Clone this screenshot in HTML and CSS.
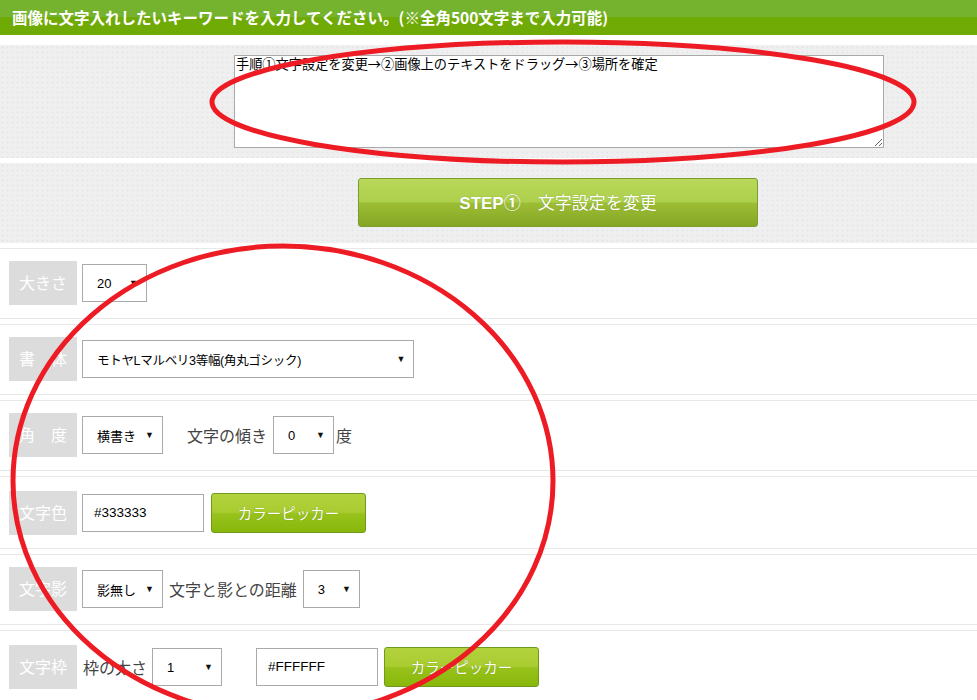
FILE: index.html
```html
<!DOCTYPE html>
<html lang="ja">
<head>
<meta charset="utf-8">
<title>文字入れ</title>
<link rel="stylesheet" href="styles.css">
</head>
<body>
<header class="title-bar">画像に文字入れしたいキーワードを入力してください。(※全角500文字まで入力可能)</header>

<section class="panel panel-text">
  <textarea class="keyword">手順①文字設定を変更→②画像上のテキストをドラッグ→③場所を確定</textarea>
</section>

<section class="panel panel-step">
  <button class="step-btn"><b>STEP①</b>　文字設定を変更</button>
</section>

<div class="settings">
  <div class="row">
    <span class="label">大きさ</span>
    <div class="select w-size"><span>20</span><i>▼</i></div>
  </div>
  <div class="row">
    <span class="label">書　体</span>
    <div class="select w-font"><span>モトヤLマルベリ3等幅(角丸ゴシック)</span><i>▼</i></div>
  </div>
  <div class="row">
    <span class="label">角　度</span>
    <div class="select w-dir"><span>横書き</span><i>▼</i></div>
    <span class="text t-tilt">文字の傾き</span>
    <div class="select w-deg"><span>0</span><i>▼</i></div>
    <span class="text t-unit">度</span>
  </div>
  <div class="row row-tall">
    <span class="label">文字色</span>
    <div class="input w-color">#333333</div>
    <button class="picker">カラーピッカー</button>
  </div>
  <div class="row">
    <span class="label">文字影</span>
    <div class="select w-dir"><span>影無し</span><i>▼</i></div>
    <span class="text t-dist">文字と影との距離</span>
    <div class="select w-dist"><span>3</span><i>▼</i></div>
  </div>
  <div class="row row-tall">
    <span class="label">文字枠</span>
    <span class="text t-width">枠の太さ</span>
    <div class="select w-border"><span>1</span><i>▼</i></div>
    <div class="input w-color w-color2">#FFFFFF</div>
    <button class="picker">カラーピッカー</button>
  </div>
</div>

<svg class="annot" width="977" height="700" viewBox="0 0 977 700">
  <ellipse cx="563" cy="102" rx="351" ry="60" fill="none" stroke="#ed1c24" stroke-width="5"/>
  <ellipse cx="283" cy="481" rx="270" ry="235" fill="none" stroke="#ed1c24" stroke-width="5"/>
</svg>
</body>
</html>
```

FILE: styles.css
```css
* { box-sizing: border-box; }

html, body {
  margin: 0;
  padding: 0;
  background: #ffffff;
  overflow: hidden;
}

body {
  width: 977px;
  height: 700px;
  position: relative;
  font-family: "Liberation Sans", "Noto Sans CJK JP", sans-serif;
  color: #333333;
}

.title-bar {
  height: 35px;
  line-height: 34px;
  padding-left: 12px;
  background: linear-gradient(#75b32e 0, #75b32e 50%, #70aa04 50%, #70aa04 100%);
  color: #ffffff;
  font-family: "Noto Sans CJK JP", sans-serif;
  font-weight: 700;
  font-size: 15.5px;
  white-space: nowrap;
}

.panel {
  background-color: #efefef;
  background-image: radial-gradient(circle, #e0e2ea 0.7px, transparent 1.1px);
  background-size: 5px 5px;
}

.panel-text {
  margin-top: 10px;
  padding: 10px 0 10px 234px;
  height: 113px;
}

.keyword {
  display: block;
  width: 650px;
  height: 93px;
  margin: 0;
  padding: 0 1px;
  border: 1px solid #a9a9a9;
  background: #ffffff;
  font-family: "Noto Sans CJK JP", sans-serif;
  font-size: 13.2px;
  line-height: 16px;
  color: #000000;
  resize: both;
}

.panel-step {
  margin-top: 5px;
  height: 80px;
  padding: 15px 0 0 358px;
}

.step-btn {
  display: block;
  width: 400px;
  height: 49px;
  margin: 0;
  padding: 0 0 2px 0;
  border: 1px solid #7a9f30;
  border-radius: 3px;
  background: linear-gradient(#bad85a 0%, #acd04c 48%, #9dbd35 52%, #84a623 100%);
  color: #ffffff;
  font-family: "Noto Sans CJK JP", sans-serif;
  font-size: 17px;
  text-shadow: 0 0 1px rgba(80, 110, 20, 0.5);
}

.step-btn b {
  font-family: "Liberation Sans", "Noto Sans CJK JP", sans-serif;
  font-weight: 700;
}

.settings {
  margin-top: 5px;
}

.row {
  display: flex;
  align-items: center;
  border-top: 1px solid #e8e8e8;
  border-bottom: 1px solid #e8e8e8;
  padding: 12px 0 13px 9px;
  margin-bottom: 5px;
}

.row-tall {
  padding-top: 14px;
}

.label {
  flex: none;
  width: 68px;
  height: 44px;
  line-height: 42px;
  background: #dcdcdc;
  color: #ffffff;
  text-align: center;
  font-family: "Noto Sans CJK JP", sans-serif;
  font-size: 16px;
  margin-right: 5px;
}

.select {
  flex: none;
  display: flex;
  align-items: center;
  justify-content: space-between;
  height: 38px;
  padding: 0 8px 0 14px;
  border: 1px solid #a9a9a9;
  background: #ffffff;
  color: #000000;
  font-size: 13px;
  white-space: nowrap;
}

.select i {
  font-style: normal;
  font-size: 9px;
  color: #111111;
}

.w-size { width: 65px; }
.w-font { width: 332px; font-size: 12.5px; letter-spacing: -0.3px; }
.w-dir { width: 81px; }
.w-deg { width: 61px; }
.w-dist { width: 57px; }
.w-border { width: 70px; }

.text {
  flex: none;
  font-family: "Noto Sans CJK JP", sans-serif;
  font-size: 16px;
  color: #444444;
}

.t-tilt { margin: 0 6px 0 24px; }
.t-unit { margin-left: 2px; }
.t-dist { margin: 0 6px 0 6px; }
.t-width { margin: 0 5px 0 1px; }

.input {
  flex: none;
  height: 38px;
  line-height: 36px;
  padding: 0 11px;
  border: 1px solid #a9a9a9;
  background: #ffffff;
  color: #000000;
  font-size: 13.5px;
}

.w-color { width: 122px; }
.w-color2 { margin-left: 34px; }

.picker {
  flex: none;
  width: 155px;
  height: 40px;
  margin: 0 0 0 7px;
  padding: 0 0 2px 0;
  border: 1px solid #6f9a1e;
  border-radius: 3px;
  background: linear-gradient(#b3d23e 0%, #a9cc30 48%, #98c21c 52%, #88b70a 100%);
  color: #ffffff;
  font-family: "Noto Sans CJK JP", sans-serif;
  font-size: 14.5px;
  text-shadow: 0 0 1px rgba(70, 100, 10, 0.6);
}

.row-tall .w-color2 + .picker { margin-left: 6px; }

.annot {
  position: absolute;
  left: 0;
  top: 0;
  pointer-events: none;
}
```
